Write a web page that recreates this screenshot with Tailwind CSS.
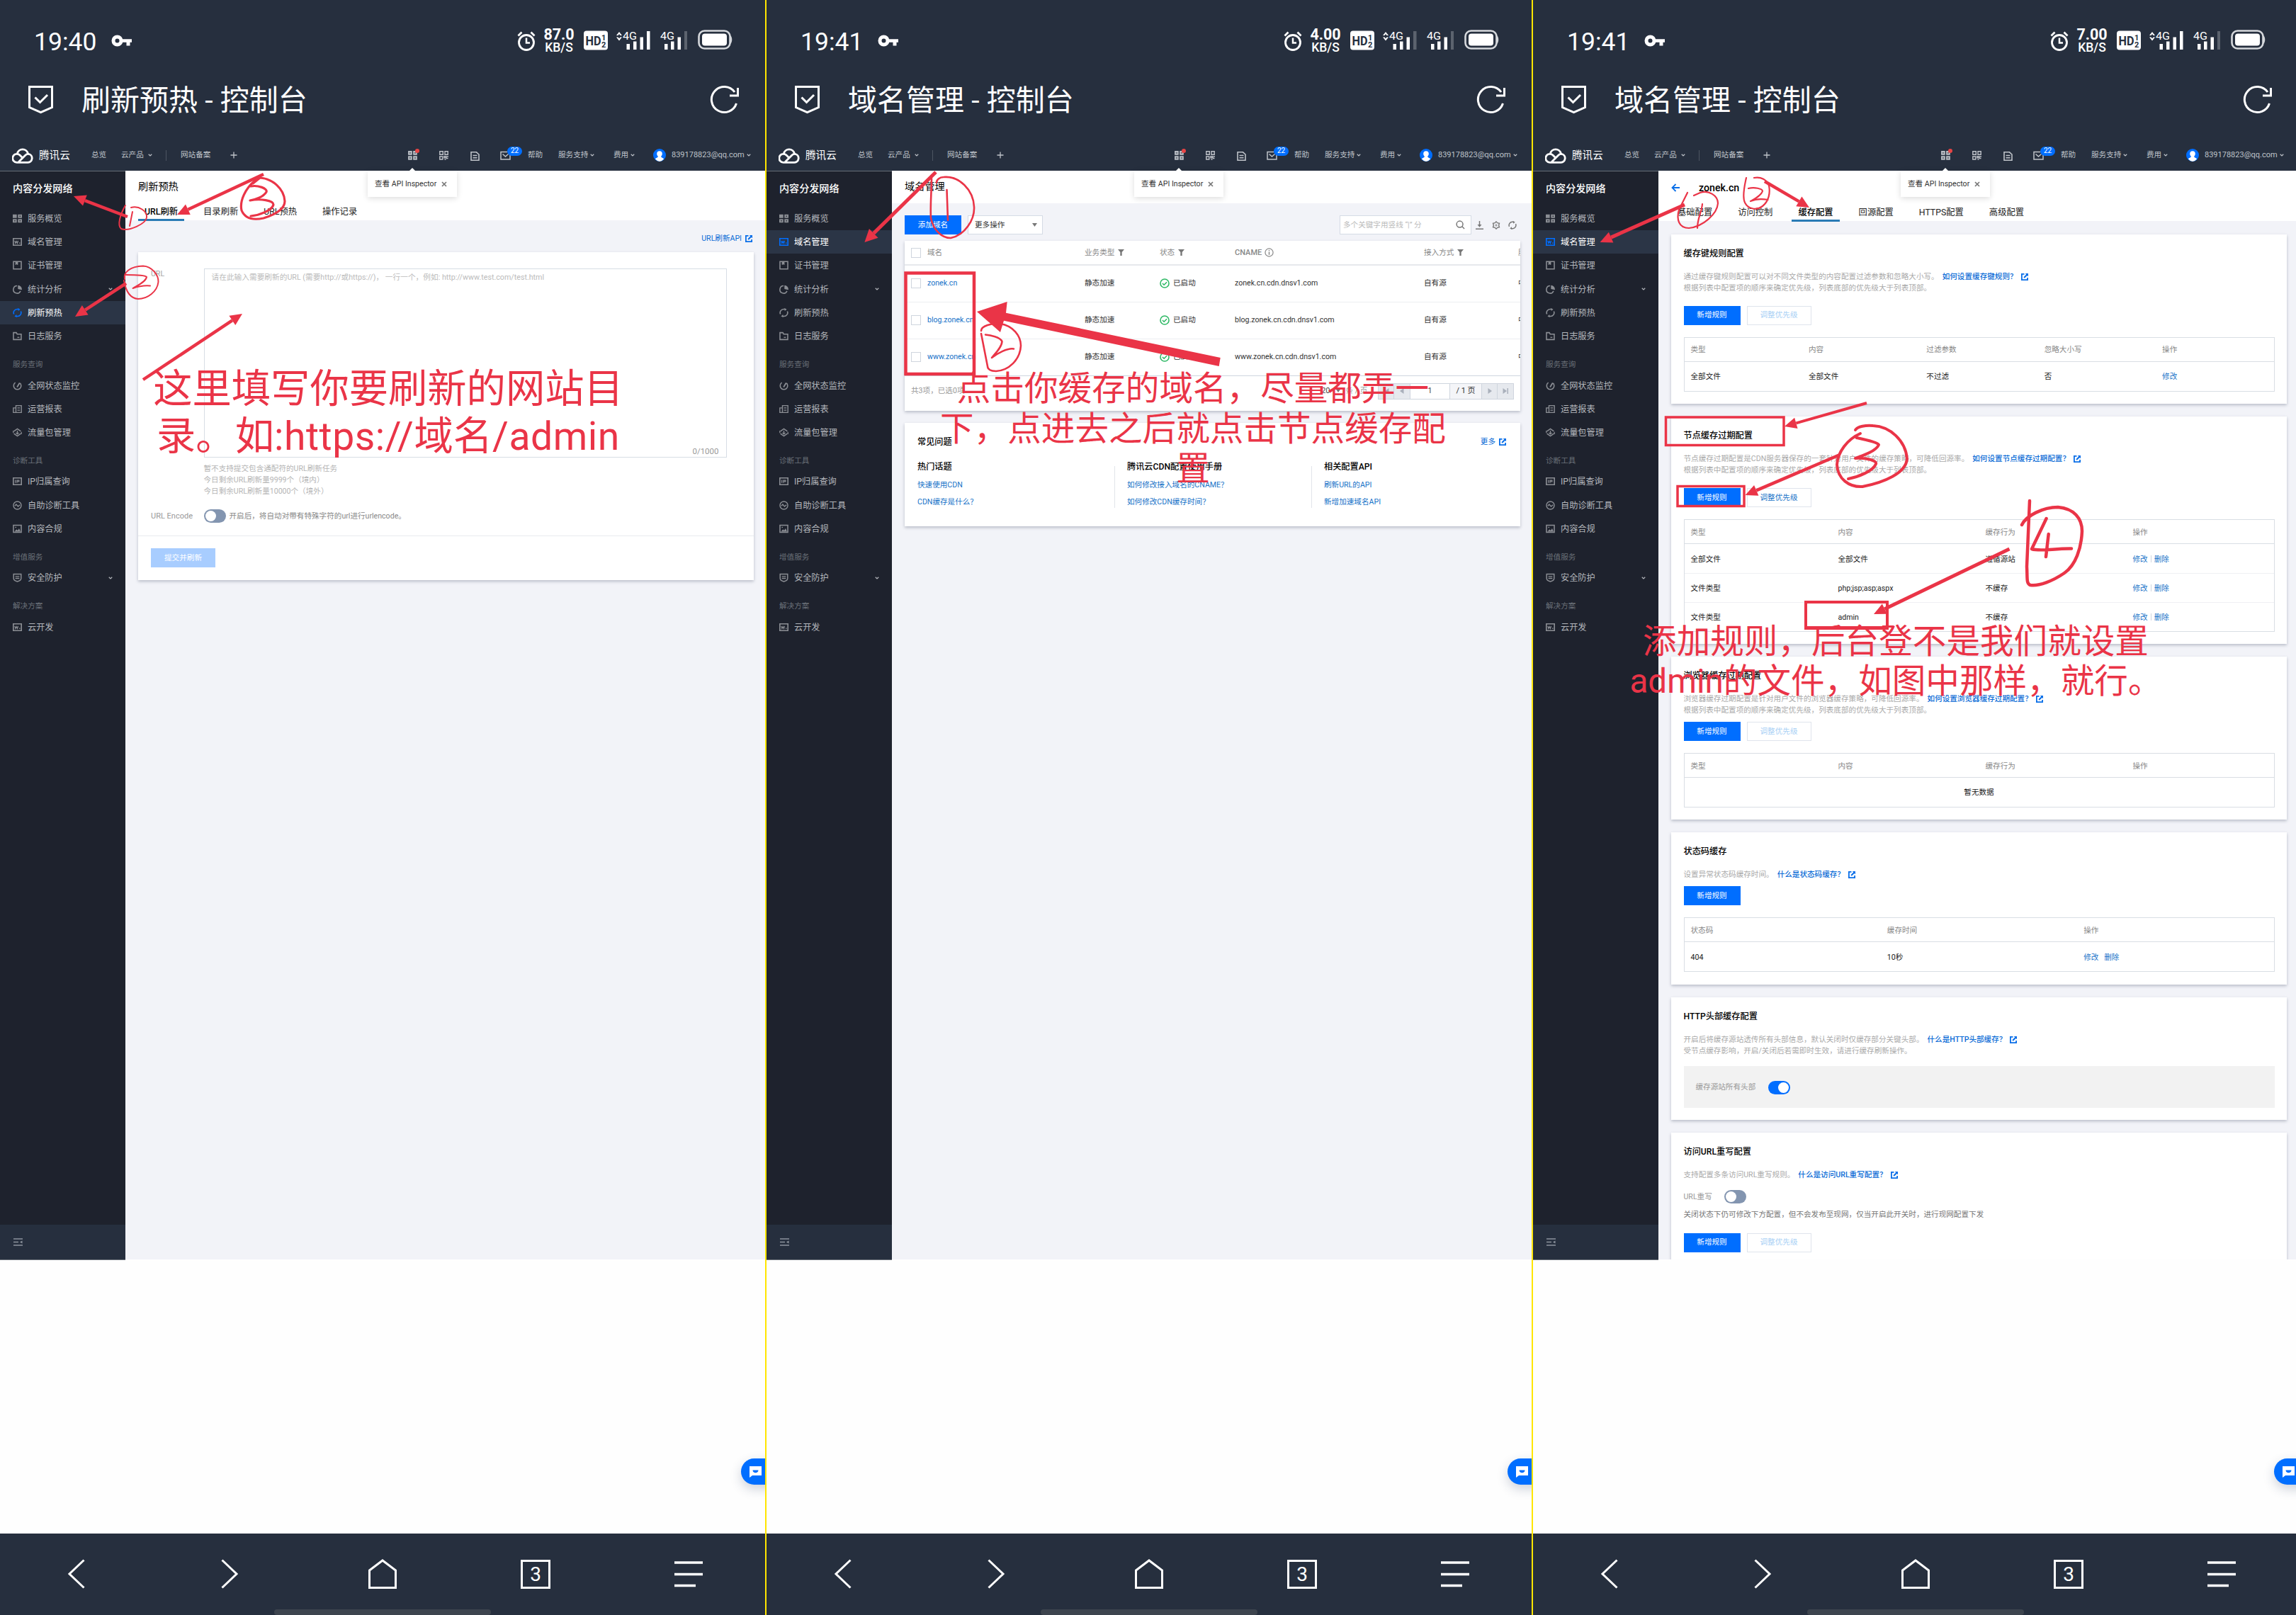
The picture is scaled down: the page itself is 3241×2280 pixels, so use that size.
<!DOCTYPE html>
<html lang="zh-CN">
<head>
<meta charset="utf-8">
<title>控制台</title>
<script src="https://cdn.jsdelivr.net/npm/@tailwindcss/browser@4"></script>
</head>
<body class="w-[3241px] h-[2280px] overflow-hidden bg-white font-['Roboto','Noto_Sans_CJK_SC',sans-serif] text-[10.6px] leading-[16px] text-black">
<div id="app" class="relative flex w-[3241px] h-[2280px] overflow-hidden"></div>
<script>
const svg = (cls, vb, body) => `<svg class="${cls}" viewBox="${vb}" fill="none" stroke="currentColor" stroke-width="1.6">${body}</svg>`;
const chev = svg('w-[6px] h-[6px] shrink-0', '0 0 8 8', '<path d="M1 2.3l3 3 3-3"/>');

/* sidebar icons, 16-unit grid */
const ic = {
  grid: '<g fill="currentColor" stroke="none"><path d="M0 1h7v6H0zM0 9h7v6H0zM9 9h7v6H9zM9 1h7v6H9z"/></g><path d="M2.8 12h1.6M11.8 12h1.6M11.8 4h1.6" stroke="#1e222d"/>',
  w: '<path d="M1 2.2h14v11.6H1z" stroke-width="2"/><path d="M3.5 6l1.3 4.3L6.4 7l1.6 3.3L9.3 6M11 10h2" stroke-width="1.5"/>',
  cert: '<path d="M1.2 1.5h13.6v13H1.2z" stroke-width="1.9"/><path d="M5 2v5l1.8-1.3L8.600 7V2" fill="currentColor" stroke-width="1"/>',
  pie: '<path d="M7.500 1.800A6.500 6.500 0 1 0 13.500 11" stroke-width="1.9"/><path d="M9 1a7 7 0 0 1 6.800 8L9 7.500z" fill="currentColor" stroke="none"/>',
  sync: '<path d="M2 10.500A6.200 6.200 0 0 1 8 1.800h2.500M14 5.500A6.200 6.200 0 0 1 8 14.200H5.500" stroke-width="2"/><path d="M9 0l4 2-3.500 3zM7 16l-4-2 3.500-3z" fill="currentColor" stroke="none"/>',
  log: '<path d="M1.200 14V2h5l1.500 2.500h7V14z" stroke-width="1.9"/><path d="M8 10.200h3.500"/>',
  gauge: '<path d="M4.500 2.600a6.500 6.500 0 1 0 8.200.9" stroke-width="1.9"/><path d="M7.500 10.500L12 3" stroke-width="2.200"/>',
  report: '<path d="M5.500 2h9.500v12H5.500zM5.500 6H1v8h4.500M8 6h4.500M8 10h4.500" stroke-width="1.700"/>',
  pack: '<path d="M2 6l6-4.200L14 6M2 10l6 4.200 6-4.200" stroke-width="1.900"/><path d="M8 5v6M5.500 8.500L8 11l2.500-2.500M1 5v4M15 7v4"/>',
  ip: '<path d="M1 2.200h14v11.600H1z" stroke-width="2"/><path d="M4.500 5.500v5.200M7.300 10.700V6.200h3.600v2.300H7.500" stroke-width="1.500"/>',
  diag: '<circle cx="8" cy="8" r="6.800" stroke-width="1.700"/><path d="M3.500 9L6 6.300l3.200 3.600L12.500 7" stroke-width="1.700"/>',
  img: '<path d="M1.200 1.800h13.600v12.400H1.200z" stroke-width="1.900"/><path d="M3 13l3.500-4 2 2 2.500-3.500L13.500 13z" fill="currentColor" stroke="none"/><path d="M4.200 5.500h2"/>',
  shield: '<path d="M1.500 1.800h13v7.500c0 3-3 4.700-6.500 5.500-3.500-.8-6.500-2.500-6.500-5.500z" stroke-width="1.800"/><path d="M4.500 6h7M4.500 9.200h7"/>'
};

const link = (t, cls='') => `<span class="inline-flex items-center gap-[5px] text-[#0a6bd6] ${cls}">${t}<svg class="w-[10px] h-[10px]" viewBox="0 0 10 10"><path d="M0 0h4.500v1.800H1.800v6.400h6.400V6H10v4H0z" fill="#0a6fe8"/><path d="M5.800 0H10v4.200L8.600 2.900 4.800 6.700 3.400 5.300l3.800-3.900z" fill="#0a6fe8"/></svg></span>`;

/* ---- phone chrome ---- */
const status = (time, speed, full) => `
<div class="flex h-[88px] w-[1080px] items-start text-white">
  <div class="ml-[48px] mt-[38px] w-[109px] text-[35.500px] leading-[42px]">${time}</div>
  ${svg('w-[30px] h-[17px] mt-[49px]', '0 0 30 17', '<circle cx="8.500" cy="8.500" r="5.500" stroke-width="5"/><path d="M13 6.200h16v4.600h-2.500v4.700h-5v-4.700H13z" fill="currentColor" stroke="none"/>')}
  ${svg('w-[26px] h-[30px] mt-[43px] ml-[543px]', '0 0 26 30', '<circle cx="13" cy="17" r="10.500" stroke-width="2.800"/><path d="M13 10.500V17.500h5" stroke-width="2.500"/><path d="M1.500 7.500l5-5M24.500 7.500l-5-5" stroke-width="2.800"/>')}
  <div class="ml-[7px] mt-[39px] w-[52px] text-center font-bold"><div class="text-[21.500px] leading-[20px]">${speed}</div><div class="text-[17.500px] font-medium leading-[16px]">KB/S</div></div>
  <svg class="ml-[9px] mt-[43px] h-[28px] w-[34px]" viewBox="0 0 34 28"><rect width="34" height="27" y=".5" rx="4" fill="#fff"/><g fill="#262f3e" font-weight="700"><text x="2.500" y="21" font-size="19" textLength="22" lengthAdjust="spacingAndGlyphs">HD</text><text x="25" y="13.500" font-size="11">1</text><text x="25" y="24" font-size="11">2</text></g></svg>
  <svg class="ml-[12px] mt-[43px] h-[28px] w-[50px]" viewBox="0 0 50 28" fill="#fff"><path d="M0 7l4-5 4 5H5.500L4 5 2.500 7zM0 9.500l4 5 4-5H5.500L4 11.500 2.500 9.500z"/><text x="9" y="13" font-size="15.500" textLength="20" lengthAdjust="spacingAndGlyphs">4G</text><path d="M14.500 19h4.500v8h-4.500zM24 15.500h4.500V27H24zM33.500 9.500H38V27h-4.500z"/><path d="M43 1h4.500v26H43z" opacity="${full ? 1 : .25}"/></svg>
  <svg class="ml-[12px] mt-[43px] h-[28px] w-[42px]" viewBox="0 0 42 28" fill="#fff"><text x="0" y="13" font-size="15.500" textLength="20" lengthAdjust="spacingAndGlyphs">4G</text><path d="M6 19h4.500v8H6zM15 15.500h4.500V27H15zM24.500 9.500H29V27h-4.500z"/><path d="M34 1h4v26h-4z" opacity=".25"/></svg>
  <svg class="ml-[11px] mt-[42px] h-[28px] w-[50px]" viewBox="0 0 50 28"><rect x="1.500" y="1.500" width="44" height="25" rx="8" fill="none" stroke="#d5d8dc" stroke-width="2.600"/><rect x="6" y="5.500" width="35" height="17" rx="4" fill="#fff"/><path d="M46 8c3 2 3 10 0 12z" fill="#d5d8dc"/></svg>
</div>`;

const titleBar = t => `
<div class="flex h-[104px] items-center text-white">
  ${svg('ml-[39px] h-[42px] w-[37px] shrink-0', '0 0 37 42', '<path d="M2.500 3.500h32v29L18.500 39.500 2.500 32.500z" stroke-width="3"/><path d="M10.500 18.500l7 7 10.500-10.500" stroke-width="3"/>')}
  <div class="ml-[39px] w-[886px] whitespace-nowrap pt-[4px] text-[41px] leading-[56px]">${t}</div>
  ${svg('h-[42px] w-[44px]', '0 0 44 42', '<path d="M38.500 27A18 18 0 1 1 36 11" stroke-width="3"/><path d="M40.500 5v11H29" stroke-width="3"/>')}
</div>`;

const nav = `
<div class="flex h-[49px] items-center pt-[5px] text-[#bfc3c9]">
  <div class="flex w-[129px] items-center pl-[17px] text-[14.600px] text-white">
    ${svg('mr-[8px] h-[23px] w-[30px]', '0 0 30 23', '<path d="M7.500 21.300h15a6 6 0 0 0 1.200-11.800 6 6 0 0 0-5 1.700l-9.500 9.500M15.500 15.500L11 11a6 6 0 1 0-3.500 10.300M7.300 9A7.800 7.800 0 0 1 22.500 9" stroke-width="2.800"/>')}腾讯云</div>
  <div class="w-[42px]">总览</div>
  <div class="flex w-[63px] items-center gap-[6px]">云产品${chev}</div>
  <div class="h-[15px] w-px bg-[#4d5562]"></div>
  <div class="w-[90px] pl-[20px]">网站备案</div>
  <div class="w-[251px]">${svg('h-[10px] w-[10px]', '0 0 10 10', '<path d="M5 .5v9M.5 5h9" stroke-width="1.300"/>')}</div>
  <div class="relative w-[44px] shrink-0">${svg('h-[13px] w-[13px]', '0 0 13 13', '<path d="M.9.9h4v4h-4zM.9 8h4v4h-4zM8 8h4v4H8zM8 .9h4v4H8z" fill="currentColor" fill-opacity=".5"/>')}<i class="absolute -top-[3px] left-[10px] h-[6px] w-[6px] rounded-full bg-[#e54545]"></i></div>
  <div class="w-[44px] shrink-0">${svg('h-[13px] w-[13px]', '0 0 13 13', '<path d="M.8.8h4.500v4.500H.8zM.8 8h4v4h-4zM8 .8h4.200v4.500H8zM7 7.800h3v2H7zM10 10.500h2.500M7.500 12h2M12 7v2" stroke-width="1.400"/>')}</div>
  <div class="w-[42px] shrink-0 pt-[3px]">${svg('h-[13px] w-[13px]', '0 0 13 13', '<path d="M1 .8h7.500L12 4v8.200H1zM3.500 5.500h6M3.500 8.800h6" stroke-width="1.600"/>')}</div>
  <div class="relative w-[39px] shrink-0">${svg('h-[13px] w-[15px]', '0 0 15 13', '<path d="M10 1.500H1v10.500h13V6M3.500 4.500L7.500 8l4-3.500" stroke-width="1.500"/>')}<b class="absolute -top-[6px] left-[10px] flex h-[13px] w-[21px] items-center justify-center rounded-full bg-[#006eff] text-[10px] font-normal text-white">22</b></div>
  <div class="w-[43px] shrink-0">帮助</div>
  <div class="flex w-[78px] shrink-0 items-center gap-[3px]">服务支持${chev}</div>
  <div class="flex w-[56px] shrink-0 items-center gap-[3px]">费用${chev}</div>
  <svg class="mr-[8px] h-[18px] w-[18px] shrink-0" viewBox="0 0 18 18"><circle cx="9" cy="9" r="9" fill="#006eff"/><path d="M9 3.200a3.800 3.800 0 0 1 3.800 3.800c0 1.700-.8 3-1.600 3.800 0 2.200 2.800 1.600 3.800 3.700A9 9 0 0 1 9 18a9 9 0 0 1-6-3.500c1-2.100 3.800-1.500 3.800-3.700C6 10 5.200 8.700 5.200 7A3.800 3.800 0 0 1 9 3.200z" fill="#fff"/></svg>
  <div class="flex items-center gap-[3px] text-[11px]">839178823@qq.com${chev}</div>
</div>`;

const item = (icon, t, on, arrow) => `
<div class="flex h-[33.300px] items-center pl-[18px] text-[12.200px] ${on ? 'bg-[#2b3546] text-white' : 'text-[#b4b7bc]'}">
  ${svg(on ? 'mr-[8px] h-[13px] w-[13px] text-[#006eff]' : 'mr-[8px] h-[13px] w-[13px] text-[#8b8e94]', '0 0 16 16', ic[icon])}<span class="w-[114px] pt-px">${t}</span>${arrow ? chev : ''}
</div>`;
const group = t => `<div class="flex h-[36px] items-center pl-[18px] pt-[11px] text-[#6a7078]">${t}</div>`;
const sidebar = a => `
<div class="flex h-[1538px] w-[177px] shrink-0 flex-col border-t border-[#666d77] bg-[#1e222d]">
  <div class="flex h-[49.600px] items-center pb-[2px] pl-[18px] text-[14.100px] font-medium text-white">内容分发网络</div>
  ${item('grid', '服务概览')}${item('w', '域名管理', a === 1)}${item('cert', '证书管理')}${item('pie', '统计分析', false, true)}${item('sync', '刷新预热', a === 4)}${item('log', '日志服务')}
  ${group('服务查询')}${item('gauge', '全网状态监控')}${item('report', '运营报表')}${item('pack', '流量包管理')}
  ${group('诊断工具')}${item('ip', 'IP归属查询')}${item('diag', '自助诊断工具')}${item('img', '内容合规')}
  ${group('增值服务')}${item('shield', '安全防护', false, true)}
  ${group('解决方案')}${item('w', '云开发')}
  <div class="mt-auto flex h-[50px] items-center border-b border-[#6b7079] bg-[#262f3e] pl-[19px] text-[#8c939d]">${svg('h-[11px] w-[13px]', '0 0 13 11', '<path d="M0 1h13M0 5.500h7M0 10h13" stroke-width="1.700"/><path d="M12.500 3.500v4L9 5.500z" fill="currentColor" stroke="none"/>')}</div>
</div>`;

const tip = `
<div class="absolute left-[519px] top-[241px] flex h-[37px] w-[126px] items-center bg-white pl-[10px] text-[#333] shadow-[0_2px_8px_rgba(0,0,0,0.14)]">
  <i class="absolute -top-[4px] left-[59px] h-0 w-0 border-x-4 border-b-4 border-x-transparent border-b-white"></i>
  <span class="w-[94px] whitespace-nowrap">查看 API Inspector</span>${svg('h-[8px] w-[8px] text-[#777]', '0 0 8 8', '<path d="M1 1l6 6M7 1L1 7" stroke-width="1.700"/>')}
</div>`;

const bottom = `
<div class="relative flex h-[115px] items-start bg-[#262f3e] pt-[35px] text-white">
  ${svg('ml-[95px] h-[44px] w-[26px]', '0 0 26 44', '<path d="M23.500 2.500L3 22l20.500 19.500" stroke-width="3"/>')}
  ${svg('ml-[190px] h-[44px] w-[26px]', '0 0 26 44', '<path d="M2.500 2.500L23 22 2.500 41.500" stroke-width="3"/>')}
  ${svg('ml-[183px] h-[44px] w-[40px]', '0 0 40 44', '<path d="M1.500 17L20 3l18.500 14v24.500h-37z" stroke-width="3"/>')}
  <div class="ml-[175px] mt-[2px] flex h-[41px] w-[42px] items-center justify-center border-[3px] border-white text-[28px] leading-none">3</div>
  ${svg('ml-[175px] h-[44px] w-[40px]', '0 0 40 44', '<path d="M0 6h40M0 22.500h40M0 38.500h30" stroke-width="3.400"/>')}
  <i class="absolute left-[387px] top-[107px] h-[8px] w-[306px] rounded-[4px] bg-[#3d444e]"></i>
</div>`;

const phone = (time, speed, full, title, a, main) => `
<section class="relative flex h-[2280px] w-[1080px] shrink-0 flex-col overflow-hidden bg-[#fefefe]">
  <div class="h-[241px] bg-[#262f3e]">${status(time, speed, full)}${titleBar(title)}${nav}</div>
  <div class="flex h-[1537px]">${sidebar(a)}<div class="h-[1537px] w-[903px] overflow-hidden bg-[#f2f3f8]">${main}</div></div>
  <div class="h-[387px]"></div>
  ${bottom}${tip}
  <div class="absolute left-[1046px] top-[2059px] flex h-[37px] w-[54px] items-center rounded-l-full bg-[#006eff] pl-[12px] shadow-[0_6px_16px_rgba(30,50,90,0.22)]"><svg class="h-[16px] w-[17px]" viewBox="0 0 17 16"><path d="M0 0h17v13H4l-4 3z" fill="#fff"/><path d="M4.500 5.500h8c0 5-8 5-8 0z" fill="#006eff"/></svg></div>
</section>`;

const tabs = (list, on) => `<div class="flex gap-[18px] pl-[18px] text-[12.300px] text-[#222]">${list.map((t, i) => `<div class="flex h-[27px] items-center whitespace-nowrap px-[9px] ${i === on ? 'border-b-[3px] border-[#2a7bb5] pt-[3px] font-medium text-black' : ''}">${t}</div>`).join('')}</div>`;
const card = 'ml-[18px] w-[869px] bg-white shadow-[0_2px_4px_rgba(40,50,80,0.28)]';
const toggle = on => `<span class="flex h-[19px] w-[31px] items-center rounded-full p-[2px] ${on ? 'justify-end bg-[#006eff]' : 'bg-[#8395b0]'}"><i class="h-[15px] w-[15px] rounded-full bg-white"></i></span>`;

/* ---- screen 1: purge ---- */
const s1 = `
<div class="h-[70px] bg-white pt-[12px]">
  <div class="h-[32px] pl-[18px] text-[14.200px] leading-[21px]">刷新预热</div>
  ${tabs(['URL刷新', '目录刷新', 'URL预热', '操作记录'], 0)}
</div>
<div class="flex h-[45px] items-center justify-end pr-[18px] pt-[7px]">${link('URL刷新API')}</div>
<div class="${card} h-[463px]">
  <div class="flex pl-[18px] pt-[23px]"><div class="w-[74.500px] text-[#a5a5a5]">URL</div>
    <div class="relative flex h-[267px] w-[738px] flex-col justify-between border border-[#d7dde5] text-[#bbb]"><div class="pl-[10px] pt-[4px] text-[10.700px]">请在此输入需要刷新的URL (需要http://或https://)，&nbsp;一行一个，例如: http://www.test.com/test.html</div><div class="pr-[10px] text-right text-[11.500px] text-[#999]">0/1000</div></div>
  </div>
  <div class="ml-[92.500px] mt-[8px] text-[#b5b5b5]">暂不支持提交包含通配符的URL刷新任务<br>今日剩余URL刷新量9999个（境内）<br>今日剩余URL刷新量10000个（境外）</div>
  <div class="mt-[17px] flex items-center pl-[18px] text-[#999]"><div class="w-[74.500px] text-[11px]">URL Encode</div>${toggle(false)}<span class="ml-[5px] text-[#888]">开启后，将自动对带有特殊字符的url进行urlencode。</span></div>
  <div class="mt-[18px] border-t border-[#e9ebef] pl-[18px] pt-[17px]"><div class="flex h-[27px] w-[91px] items-center justify-center bg-[#a8cdff] text-white">提交并刷新</div></div>
</div>`;

/* ---- screen 2: domain list ---- */
const filt = '<svg class="ml-[5px] h-[9px] w-[9px]" viewBox="0 0 10 10"><path d="M0 0h10L6.300 4.500V10H3.700V4.500z" fill="#777"/></svg>';
const box = '<i class="h-[14px] w-[14px] border border-[#cfd5de] bg-white"></i>';
const cols = 'grid grid-cols-[23px_222px_106px_106px_267px_133px_30px] items-center overflow-hidden whitespace-nowrap pl-[9px]';
const drow = (d, last) => `<div class="${cols} h-[52px] border-b pb-[2px] ${last ? 'border-[#cfd5e0]' : 'border-[#eceef1]'} text-[#333]"><span class="flex">${box}</span><span class="text-[#1672c8]">${d}</span><span>静态加速</span><span class="flex items-center gap-[5px]">${svg('h-[14px] w-[14px] text-[#2fb966]', '0 0 16 16', '<circle cx="8" cy="8" r="6.900" stroke-width="1.800"/><path d="M4.500 8l2.500 2.500 4.500-4.500" stroke-width="1.800"/>')}已启动</span><span>${d}.cdn.dnsv1.com</span><span>自有源</span><span>中国</span></div>`;
const pg = (p, w) => `<span class="flex h-full items-center justify-center border-r border-[#cfd5de] ${w}">${svg('h-[8px] w-[8px] text-[#a9b0bb]', '0 0 8 8', `<path d="${p}" fill="currentColor" stroke="none"/>`)}</span>`;
const faq = (h, a, b, cls) => `<div class="h-[59px] ${cls}"><div class="-mt-[7px] text-[12.200px] font-medium">${h}</div><div class="mt-[10px] text-[#1672c8]">${a}</div><div class="mt-[8px] text-[#1672c8]">${b}</div></div>`;
const s2 = `
<div class="h-[46px] bg-white pl-[18px] pt-[12px] text-[14.200px] leading-[21px]">域名管理</div>
<div class="flex items-center pl-[18px] pt-[17px]">
  <div class="flex h-[27px] w-[80px] items-center justify-center bg-[#006eff] text-white">添加域名</div>
  <div class="ml-[9px] flex h-[27px] w-[106px] items-center justify-between border border-[#d5dbe5] bg-white pl-[9px] pr-[7px] text-[#333]">更多操作<svg class="h-[5px] w-[7px]" viewBox="0 0 7 5"><path d="M0 0h7L3.500 5z" fill="#777"/></svg></div>
  <div class="ml-[419px] flex h-[27px] w-[186px] items-center justify-between border border-[#d5dbe5] bg-white pl-[4px] pr-[8px] text-[#bbb]">多个关键字用竖线 “|” 分${svg('h-[13px] w-[13px] text-[#777]', '0 0 14 14', '<circle cx="6" cy="6" r="4.800"/><path d="M9.500 9.500l3.500 3.500"/>')}</div>
  <div class="flex items-center gap-[11px] pl-[6px] text-[#777]">
    ${svg('h-[12px] w-[12px]', '0 0 12 12', '<path d="M0 11.200h11M5.500 0v7" stroke-width="1.500"/><path d="M2.500 5h6l-3 3.800z" fill="currentColor" stroke="none"/>')}
    ${svg('h-[12px] w-[12px]', '0 0 14 14', '<path d="M7 1l2 2.200 3.200.600-1 3.200 1 3.200-3.200.600L7 13l-2-2.200-3.200-.600 1-3.200-1-3.200L5 3.200z" stroke-width="1.600"/><circle cx="7" cy="7" r="1.300" stroke-width="1"/>')}
    ${svg('h-[12px] w-[12px]', '0 0 16 16', ic.sync)}
  </div>
</div>
<div class="${card} mt-[9px] h-[240px] overflow-hidden">
  <div class="${cols} h-[35px] border-b-2 border-[#e6e8ec] text-[#888]"><span class="flex">${box}</span><span>域名</span><span class="flex items-center">业务类型${filt}</span><span class="flex items-center">状态${filt}</span><span class="flex items-center gap-[4px] text-[11px] font-medium">CNAME${svg('h-[13px] w-[13px]', '0 0 14 14', '<circle cx="7" cy="7" r="6" stroke-width="1.300"/><path d="M7 6v4.500M7 3.200v1.500" stroke-width="1.600"/>')}</span><span class="flex items-center">接入方式${filt}</span><span>服务</span></div>
  ${drow('zonek.cn')}${drow('blog.zonek.cn')}${drow('www.zonek.cn', true)}
  <div class="flex h-[42px] items-center pl-[9px] pr-[9px] text-[#999]"><span class="w-[580px]">共3项，已选0项</span><span class="flex w-[80px] items-center gap-[8px]"><b class="text-[11px] font-normal text-[#444]">20</b><svg class="h-[4px] w-[6px]" viewBox="0 0 7 5"><path d="M0 0h7L3.500 5z" fill="#777"/></svg><span>条 / 页</span></span>
    <div class="flex h-[23px] border border-r-0 border-[#cfd5de] bg-[#e6e9ee]">${pg('M0 0h1.500v8H0zM7.500 0v8L2 4z', 'w-[22px]')}${pg('M6.500 0v8L1 4z', 'w-[23px]')}<span class="flex w-[56px] items-center justify-center border-r border-[#cfd5de] bg-white text-[#444]">1</span><span class="flex w-[45px] items-center justify-center border-r border-[#cfd5de] bg-[#f4f5f8] text-[11px] text-[#333]">/ 1 页</span>${pg('M1.500 0v8L7 4z', 'w-[22px]')}${pg('M6.500 0H8v8H6.500zM.500 0v8L6 4z', 'w-[23px]')}</div>
  </div>
</div>
<div class="${card} mt-[17px] h-[146px] px-[18px] pt-[18px]">
  <div class="flex h-[18px] items-center justify-between"><span class="text-[12.200px] font-medium">常见问题</span><span class="pr-[2px]">${link('更多')}</span></div>
  <div class="mt-[25px] flex">${faq('热门话题', '快速使用CDN', 'CDN缓存是什么？', 'w-[279px] border-r border-[#e1e4ea]')}${faq('腾讯云CDN配置使用手册', '如何修改接入域名的CNAME？', '如何修改CDN缓存时间？', 'w-[278px] border-r border-[#e1e4ea] pl-[17px]')}${faq('相关配置API', '刷新URL的API', '新增加速域名API', 'pl-[17px]')}</div>
</div>`;

/* ---- screen 3: cache config ---- */
const btns = (second, dim) => `<div class="flex gap-[9px]"><div class="flex h-[27px] w-[80px] items-center justify-center bg-[#006eff] text-white">新增规则</div>${second ? `<div class="flex h-[27px] w-[91px] items-center justify-center border border-[#dfe4ec] bg-white ${dim ? 'text-[#a8d0f5]' : 'text-[#1672c8]'}">调整优先级</div>` : ''}</div>`;
const grid = { 3: 'grid-cols-3', 4: 'grid-cols-4', 5: 'grid-cols-5' };
const table = (head, rows) => `<div class="mt-[17px] w-[834px] border border-[#d9dee4]"><div class="grid ${grid[head.length]} h-[34px] items-center border-b border-[#d9dee4] pt-[2px] text-[#888]">${head.map(h => `<span class="pl-[9px]">${h}</span>`).join('')}</div>${rows.length ? rows.map((r, i) => `<div class="grid ${grid[head.length]} h-[41px] items-center pt-[2px] ${i ? 'border-t border-[#eff0f3]' : ''} text-[#222]">${r.map(c => `<span class="pl-[9px]">${c}</span>`).join('')}</div>`).join('') : '<div class="flex h-[41px] items-center justify-center text-[#222]">暂无数据</div>'}</div>`;
const head = (t, d, l, d2) => `<div class="h-[18px] text-[12.200px] leading-[18px] font-medium">${t}</div><div class="mt-[16px] whitespace-nowrap text-[#aaa]"><div class="flex h-[16px] items-center gap-[5px]">${d}${link(l, 'font-medium')}</div>${d2 ? `<div class="h-[16px]">${d2}</div>` : ''}</div>`;
const A = t => `<a class="text-[#1672c8]">${t}</a>`;
const ops = `${A('修改')}<i class="mx-[4px] inline-block h-[10px] w-px bg-[#cfd5de] align-[-1px]"></i>${A('删除')}`;
const pri = '根据列表中配置项的顺序来确定优先级，列表底部的优先级大于列表顶部。';
const s3 = `
<div class="h-[71px] bg-white pt-[13px]">
  <div class="flex h-[21px] items-center pl-[18px] text-[14.200px] font-medium">${svg('mr-[27px] h-[12px] w-[12px] text-[#0a6fe8]', '0 0 12 12', '<path d="M12 6H1.500M6.500 1L1.500 6l5 5" stroke-width="1.800"/>')}zonek.cn</div>
  <div class="pt-[11px]">${tabs(['基础配置', '访问控制', '缓存配置', '回源配置', 'HTTPS配置', '高级配置'], 2)}</div>
</div>
<div class="flex flex-col gap-[18px] pt-[18.500px]">
  <div class="${card} h-[239.500px] px-[17.500px] pt-[18px]">${head('缓存键规则配置', '通过缓存键规则配置可以对不同文件类型的内容配置过滤参数和忽略大小写。', '如何设置缓存键规则？', pri)}<div class="pt-[17px]">${btns(1, 1)}</div>${table(['类型', '内容', '过滤参数', '忽略大小写', '操作'], [['全部文件', '全部文件', '不过滤', '否', A('修改')]])}</div>
  <div class="${card} h-[321px] px-[17.500px] pt-[18px]">${head('节点缓存过期配置', '节点缓存过期配置是CDN服务器保存的一套针对用户文件的缓存策略，可降低回源率。', '如何设置节点缓存过期配置？', pri)}<div class="pt-[17px]">${btns(1, 0)}</div>${table(['类型', '内容', '缓存行为', '操作'], [['全部文件', '全部文件', '遵循源站', ops], ['文件类型', 'php;jsp;asp;aspx', '不缓存', ops], ['文件类型', 'admin', '不缓存', ops]])}</div>
  <div class="${card} h-[230px] px-[17.500px] pt-[18px]">${head('浏览器缓存过期配置', '浏览器缓存过期配置是针对用户文件的浏览器缓存策略，可降低回源率。', '如何设置浏览器缓存过期配置？', pri)}<div class="pt-[8px]">${btns(1, 1)}</div>${table(['类型', '内容', '缓存行为', '操作'], [])}</div>
  <div class="${card} h-[214.500px] px-[17.500px] pt-[18px]">${head('状态码缓存', '设置异常状态码缓存时间。', '什么是状态码缓存？')}<div class="pt-[8px]">${btns(0)}</div>${table(['状态码', '缓存时间', '操作'], [['404', '10秒', A('修改') + '&nbsp;&nbsp;&nbsp;' + A('删除')]])}</div>
  <div class="${card} h-[173px] px-[17.500px] pt-[18px]">${head('HTTP头部缓存配置', '开启后将缓存源站透传所有头部信息，默认关闭时仅缓存部分关键头部。', '什么是HTTP头部缓存？', '受节点缓存影响，开启/关闭后若需即时生效，请进行缓存刷新操作。')}<div class="mt-[13px] flex h-[59px] w-[834px] items-center gap-[18px] bg-[#f2f2f2] pl-[17px] pt-[2px] text-[#999]">缓存源站所有头部${toggle(true)}</div></div>
  <div class="${card} h-[200px] px-[17.500px] pt-[18px]">${head('访问URL重写配置', '支持配置多条访问URL重写规则。', '什么是访问URL重写配置？')}<div class="mt-[13px] flex h-[20px] items-center gap-[17px] text-[#999]">URL重写${toggle(false)}</div><div class="mt-[7px] text-[#777]">关闭状态下仍可修改下方配置，但不会发布至现网，仅当开启此开关时，进行现网配置下发</div><div class="pt-[18px]">${btns(1, 1)}</div></div>
</div>`;

/* ---- hand-drawn notes over the screens ---- */
const RED = '#ea3447';
const arrow = (x1, y1, x2, y2, w = 4.5, len = 17, half = 8) => {
  const a = Math.atan2(y2 - y1, x2 - x1), c = Math.cos(a), s = Math.sin(a), bx = x2 - len * c, by = y2 - len * s;
  return `<path d="M${x1} ${y1}L${bx} ${by}" stroke-width="${w}"/><path d="M${x2} ${y2}L${bx - half * s} ${by + half * c}L${bx + half * s} ${by - half * c}z" fill="${RED}" stroke="none"/>`;
};
const p = (d, w) => `<path d="${d}" stroke-width="${w}" stroke-linecap="round" stroke-linejoin="round"/>`;
const note = (pos, t) => `<div class="absolute whitespace-nowrap text-center text-[#ea3447] ${pos}">${t}</div>`;
const notes = `
<svg class="absolute left-0 top-0 h-[2280px] w-[3241px]" viewBox="0 0 3241 2280" fill="none" stroke="${RED}">
  ${arrow(180, 306, 104, 277)}${arrow(372, 246, 250, 303)}${arrow(178, 400, 106, 447)}${arrow(202, 536, 342, 443)}
  ${p('M177 290C170 302 165 318 171 323C182 327 206 316 207 307C208 298 196 290 185 293M187 299L183 319', 2)}
  ${p('M176 394C174 384 184 376 202 375.500C214 376 224 388 223.500 398C222 412 208 422 195 422C182 421 177 408 175 396M178 388C188 388 204 388 207 391C206 398 194 403 187.500 407C196 404 206 403 212 403.500', 2)}
  ${p('M361 254C346 266 338 284 341 297C346 309 358 311 372 308C388 303 402 296 402 284C401 266 384 252 367 251L357 259M354 263C364 261 378 266 376 271C372 278 360 282 353 283C368 280 386 283 386 289C384 297 366 304 354 305', 3.2)}
  <rect x="1278.500" y="385.500" width="96.500" height="142.500" stroke-width="4.500"/>
  ${arrow(1321, 243, 1220.4, 342, 5, 18, 9)}
  <path d="M1379 440L1421.700 426L1420 441.700L1722.700 505L1720.700 517L1417 452.700L1412 469z" fill="${RED}" stroke="none"/>
  ${p('M1315 252C1315 270 1313 290 1314 308C1318 326 1330 336 1342 336C1362 332 1376 310 1375 292C1374 268 1354 248 1332 250C1326 250 1322 254 1322 258M1336.500 268L1338 311', 2.600)}
  ${p('M1385 467C1385 460 1400 456 1412 457C1430 460 1441 474 1441 488C1440 508 1424 523 1406 524C1398 524 1394 521 1394 517L1385 471M1391 472.500C1398 473 1412 476 1414.500 482C1414 490 1406 498 1400 505C1408 499 1422 491 1431 492.500', 2.600)}
  ${arrow(2378, 289, 2258.600, 342, 5)}${arrow(2491, 256, 2554, 293, 4.500)}
  ${p('M2382 272L2370 296C2366 310 2370 322 2384 322C2404 320 2424 302 2425 287C2425 276 2412 268 2400 272L2391 276M2403 288C2402 300 2396 308 2396 322', 2.200)}
  ${p('M2465 251C2462 264 2460 280 2463 286C2468 296 2480 297 2488 291C2497 284 2499 272 2497 262C2494 254 2486 249 2476 251M2468 266C2476 264 2488 266 2488 270C2486 276 2478 280 2471 284C2480 280 2490 281 2495.500 282', 2.200)}
  <rect x="2351.500" y="589" width="166.500" height="39.500" stroke-width="3.500"/><rect x="2368" y="686.500" width="94" height="28" stroke-width="3.500"/>
  <path d="M2547 848H2666V889H2547zM2551 852V884H2662V852z" fill="${RED}" fill-rule="evenodd" stroke="none"/>
  ${arrow(2635, 569, 2519, 602, 4)}${arrow(2597, 642, 2463.600, 699, 4.500)}${arrow(2836.500, 775, 2645, 867, 5)}
  ${p('M2619 607C2622 602 2634 600 2644 601C2668 602 2690 622 2692 648C2690 668 2660 681 2629 687C2610 688 2594 676 2593 656C2594 638 2608 620 2626 612M2620.500 618C2630 620 2650 624 2652 628C2648 637 2630 643 2619 647C2634 646 2650 650 2648 655C2644 665 2624 673 2609 676', 4)}
  ${p('M2854 741C2860 728 2884 716 2905 716C2928 718 2939 732 2939 750C2938 774 2930 798 2914 809C2898 820 2878 828 2866 826C2860 824 2862 816 2861 800L2865 707M2888.600 732L2868 775C2880 779 2900 774 2924 774.500M2891.700 754L2888 786', 4.500)}
</svg>
${note('left-[148px] top-[517px] w-[800px] text-[55.300px] leading-[66.500px]', '这里填写你要刷新的网站目<br>录。如<span class="tracking-[0.55px]">:https://</span>域名<span class="tracking-[0.55px]">/admin</span>')}
${note('left-[1284px] top-[521px] w-[800px] text-[47.600px] leading-[56.500px]', '点击你缓存的域名，尽量都弄一<br>下，点进去之后就点击节点缓存配<br>置')}
${note('left-[2276px] top-[879px] w-[800px] text-[47.600px] leading-[55.500px]', '添加规则，后台登不是我们就设置<br>admin的文件，如图中那样，就行。')}`;

const rule = '<div class="h-[2280px] w-[2px] shrink-0 bg-[#ffe600]"></div>';
document.getElementById('app').innerHTML =
  phone('19:40', '87.0', true, '刷新预热 - 控制台', 4, s1) + rule +
  phone('19:41', '4.00', false, '域名管理 - 控制台', 1, s2) + rule +
  phone('19:41', '7.00', true, '域名管理 - 控制台', 1, s3) + notes;
</script>
</body>
</html>
